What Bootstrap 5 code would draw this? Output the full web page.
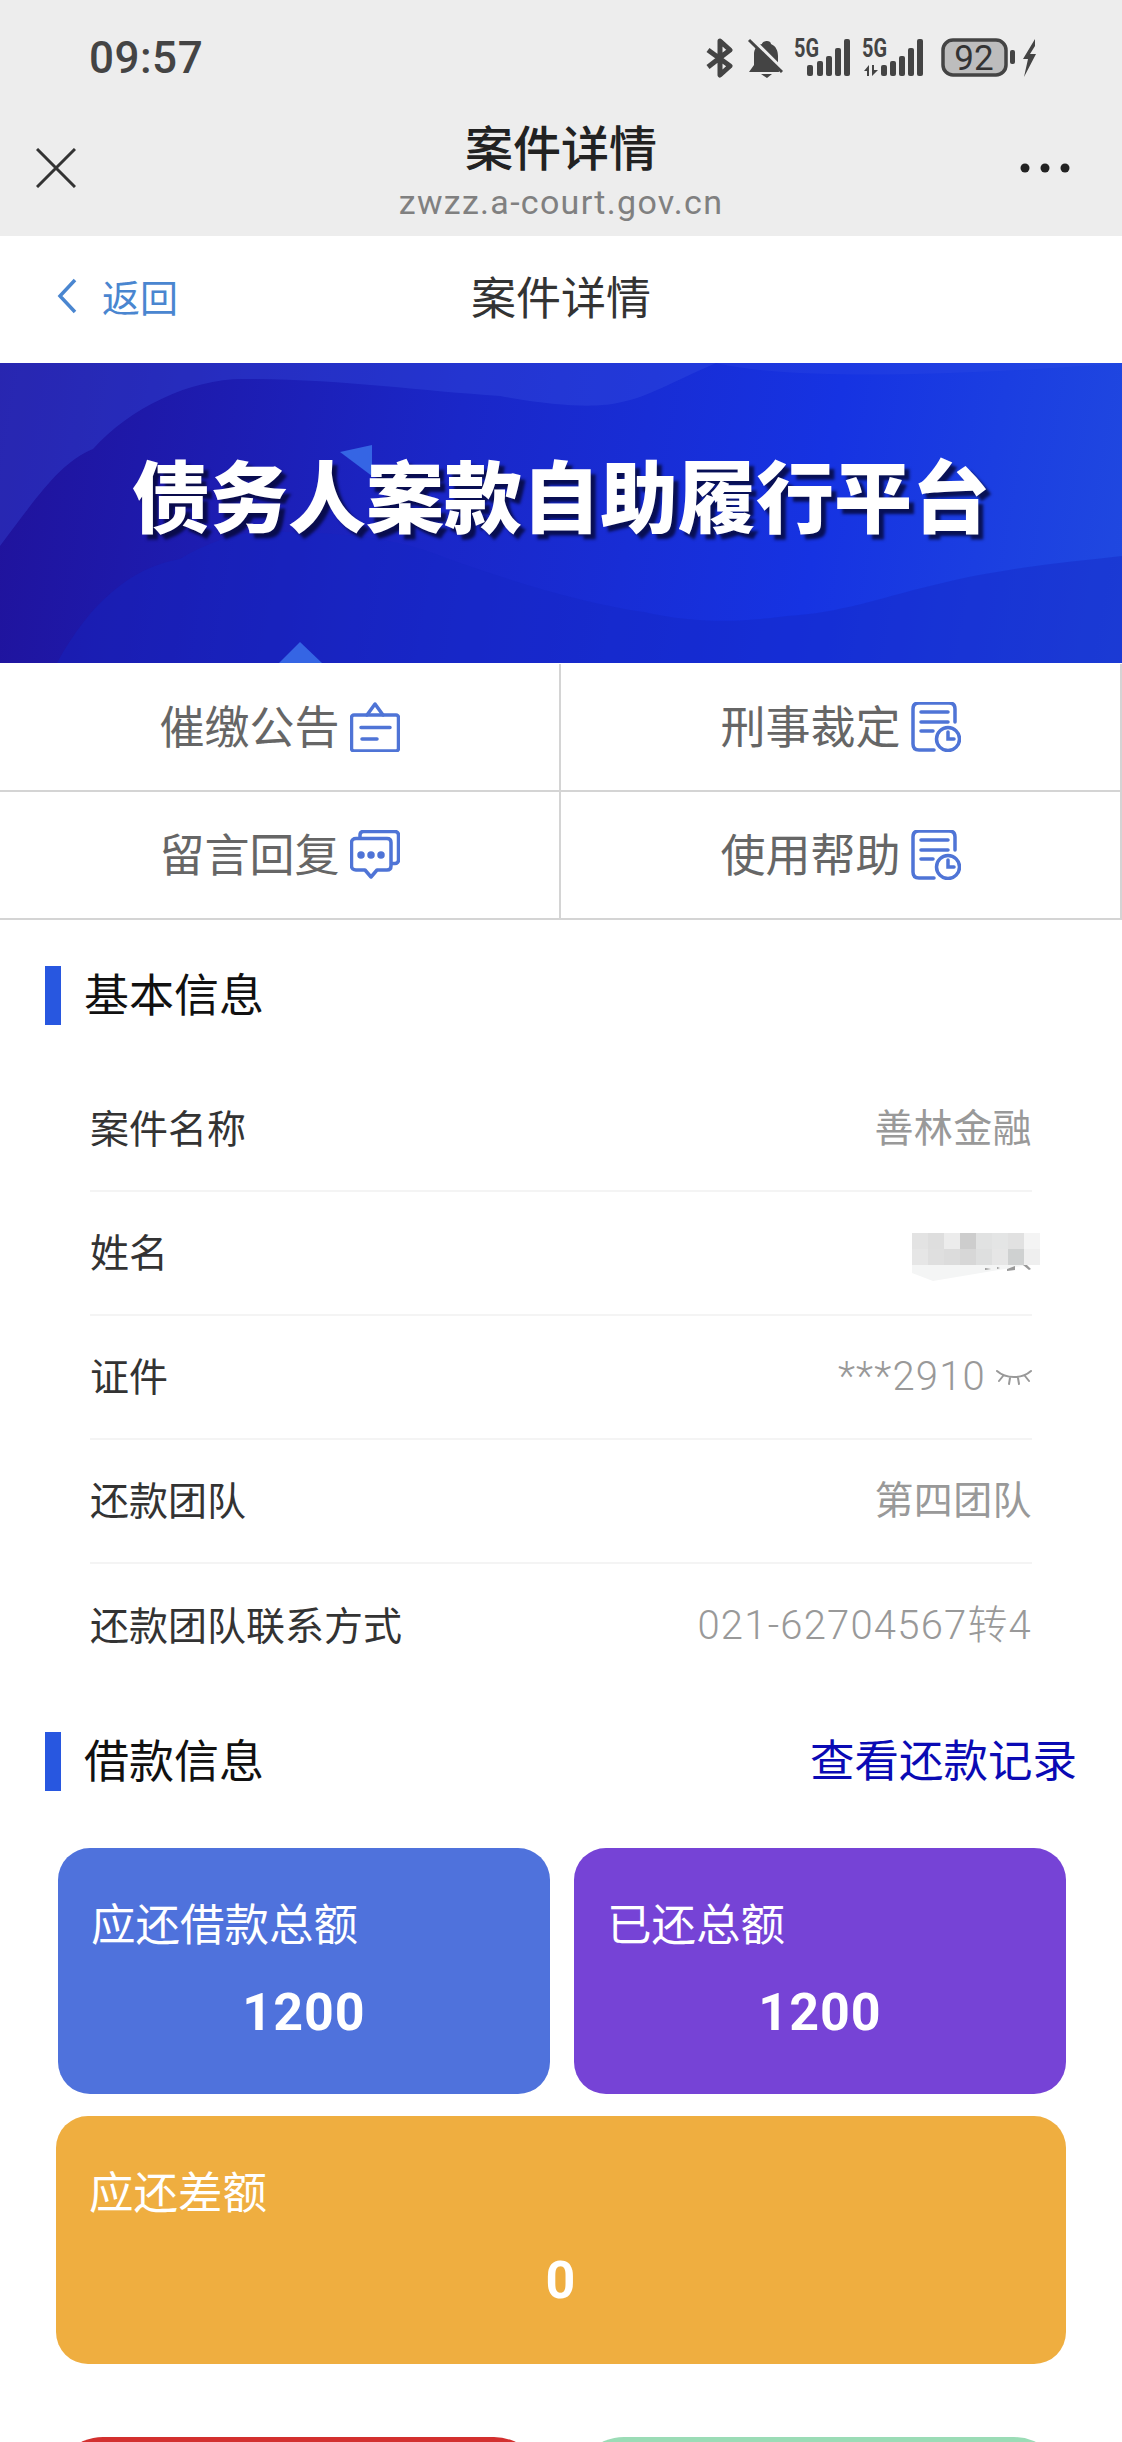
<!DOCTYPE html>
<html lang="zh-CN">
<head>
    <meta charset="UTF-8">
    <meta name="viewport" content="width=device-width, initial-scale=1.0">
    <title>案件详情</title>
    <link href="https://cdn.jsdelivr.net/npm/bootstrap@5.3.0/dist/css/bootstrap.min.css" rel="stylesheet">
    <style>
        html, body { height: 2442px; overflow: hidden; }
        body { font-family: "Noto Sans CJK SC", sans-serif; background: #fff; color: #333; width: 1122px; }

        /* browser chrome */
        .chrome { background: #ededed; height: 236px; }
        .status-row { height: 116px; padding: 0 85px 0 89px; }
        .status-time { font: 500 44px/1 Roboto, sans-serif; color: #444; letter-spacing: .5px; }
        .status-icons svg { display: block; }
        .gap-bell { margin-left: 13px; }
        .gap-sig1 { margin-left: 11px; }
        .gap-sig2 { margin-left: 10px; }
        .gap-batt { margin-left: 17px; }
        .gap-bolt { margin-left: 6px; }
        .title-row { height: 120px; padding: 0 52px 16px 36px; }
        .close-ico { margin-right: 26px; }
        .title-block { padding-top: 5px; }
        .title-main { font-size: 48px; line-height: 1; color: #222; font-weight: 500; }
        .title-url { font: 400 34px/1 Roboto, sans-serif; color: #808080; letter-spacing: 1.3px; margin-top: 16px; }

        /* page nav */
        .page-nav { height: 127px; padding: 0 57px 8px; }
        .back-link { color: #4a86d0; font-size: 38px; line-height: 1; gap: 25px; width: 121px; }
        .page-title { font-size: 45px; color: #333; line-height: 1; }
        .nav-spacer { width: 121px; }

        .banner { height: 300px; margin-bottom: 1px; padding-bottom: 40px; position: relative; overflow: hidden; background: linear-gradient(100deg, #20129a 0%, #1a27c8 40%, #1633e2 72%, #2049e0 100%); }
        .banner svg { position: absolute; inset: 0; }
        .banner-text { position: relative; font-size: 78px; font-weight: 900; color: #fff; line-height: 1; text-shadow: 5px 5px 3px rgba(5, 8, 50, .8); }

        /* 2x2 shortcuts */
        .shortcut { height: 128px; border-right: 2px solid #d4d4d4; border-bottom: 2px solid #d4d4d4; color: #666; font-size: 45px; gap: 10px; line-height: 1; }
        .shortcut span { padding-bottom: 5px; }
        .shortcut svg { flex: none; }

        .section-head { height: 59px; padding-right: 45px; }
        .section-first { margin-top: 46px; }
        .section-second { margin-top: 44px; }
        .section-bar { width: 16px; height: 59px; background: #2857e0; margin-left: 45px; margin-right: 23px; }
        .section-name { font-size: 45px; color: #111; line-height: 1; padding-bottom: 6px; }
        .record-link { font-size: 44.500px; color: #0a0ab4; line-height: 1; text-decoration: none; padding-bottom: 6px; }

        .info-list { margin: 43px 90px 0 90px; }
        .info-row { height: 124px; border-bottom: 2px solid #f4f4f4; font-size: 39px; line-height: 1; color: #333; }
        .info-row:last-child { border-bottom: 0; }
        .info-key { padding-bottom: 6px; }
        .info-val { color: #999; font-family: Roboto, "Noto Sans CJK SC", sans-serif; letter-spacing: .4px; }
        .info-num { font-size: 40px; font-weight: 300; letter-spacing: 1.2px; }
        .eye-gap { gap: 10px; }
        .name-val { position: relative; width: 120px; height: 40px; }
        .name-val svg { position: absolute; right: -8px; top: 0; }

        .tiles { padding: 0 56px; }
        .tiles-top { margin-top: 57px; }
        .tile { border-radius: 32px; color: #fff; height: 246px; padding: 49px 0 0 33px; }
        .tile-half { width: 492px; }
        .tile-blue { background: #4f72dc; margin-left: 2px; }
        .tile-purple { background: #7643d6; }
        .tile-orange { background: #efae40; margin-top: 22px; height: 248px; }
        .tile-label { font-size: 44.500px; line-height: 50px; }
        .tile-num { font: 700 52px/1 Roboto, sans-serif; text-align: center; margin: 40px 33px 0 0; letter-spacing: 1px; }

        .bottom-btns { padding: 73px 58px 0 53px; gap: 30px; }
        .bottom-btn { flex: 1; height: 100px; border-radius: 50px; }
        .btn-red { background: #d3302f; }
        .btn-green { background: #9bdcb6; }
    </style>
</head>
<body>
    <!-- 手机浏览器顶部 -->
    <div class="chrome">
        <div class="status-row d-flex justify-content-between align-items-center">
            <span class="status-time">09:57</span>
            <div class="status-icons d-flex align-items-center">
                <!-- 蓝牙 -->
                <svg width="28" height="40" viewBox="0 0 28 40" fill="none" stroke="#444" stroke-width="5" stroke-linejoin="round"><path d="M2 12l22 16-10 9V3l10 9L2 29"/></svg>
                <!-- 静音铃 -->
                <svg class="gap-bell" width="36" height="40" viewBox="0 0 36 40" fill="#444"><path d="M20 3c2 0 4 1 4 3 5 2 7 7 7 12v8l1 8H2l5-7V16c0-5 3-9 8-10 0-2 3-3 5-3zM14 36h11l-5 4z"/><path d="M5 1l31 31" stroke="#ededed" stroke-width="4"/><path d="M2 2l33 32" stroke="#444" stroke-width="3"/></svg>
                <!-- 信号1 -->
                <svg class="gap-sig1" width="58" height="50" viewBox="0 -5 58 50" fill="#444"><text x="0" y="19" font-family="Roboto, sans-serif" font-weight="700" font-size="25" textLength="25" lengthAdjust="spacingAndGlyphs">5G</text><rect x="13" y="27" width="6" height="11" rx="2"/><rect x="23" y="23" width="6" height="15" rx="2"/><rect x="32" y="18" width="6" height="20" rx="2"/><rect x="41" y="10" width="6" height="28" rx="2"/><rect x="50" y="1" width="6" height="37" rx="2"/></svg>
                <!-- 信号2 -->
                <svg class="gap-sig2" width="62" height="50" viewBox="0 -5 62 50" fill="#444"><text x="0" y="19" font-family="Roboto, sans-serif" font-weight="700" font-size="25" textLength="25" lengthAdjust="spacingAndGlyphs">5G</text><path d="M2 33l5-6v11H5v-5zM10 27h2v5h4l-6 6z"/><rect x="19" y="27" width="6" height="11" rx="2"/><rect x="28" y="23" width="6" height="15" rx="2"/><rect x="37" y="18" width="6" height="20" rx="2"/><rect x="46" y="10" width="6" height="28" rx="2"/><rect x="55" y="1" width="6" height="37" rx="2"/></svg>
                <!-- 电量 -->
                <svg class="gap-batt" width="74" height="40" viewBox="0 0 74 40" fill="none"><rect x="2" y="2" width="63" height="35" rx="10" fill="#bdbdbd" stroke="#444" stroke-width="3.500"/><rect x="69" y="12" width="5" height="14" rx="2" fill="#444"/><text x="33" y="32" text-anchor="middle" font-family="Roboto, sans-serif" font-size="35" fill="#333">92</text></svg>
                <!-- 充电 -->
                <svg class="gap-bolt" width="16" height="38" viewBox="0 0 16 38" fill="#444"><path d="M14 0L2 20h5l-4 18L15 15H9l5-8z"/></svg>
            </div>
        </div>
        <div class="title-row d-flex justify-content-between align-items-center">
            <svg class="close-ico" width="40" height="40" viewBox="0 0 40 40" fill="none" stroke="#333" stroke-width="3"><path d="M1 1l38 38M39 1L1 39"/></svg>
            <div class="title-block text-center align-self-start">
                <div class="title-main">案件详情</div>
                <div class="title-url">zwzz.a-court.gov.cn</div>
            </div>
            <svg width="50" height="10" viewBox="0 0 50 10" fill="#222"><circle cx="5" cy="5" r="4.500"/><circle cx="25" cy="5" r="4.500"/><circle cx="45" cy="5" r="4.500"/></svg>
        </div>
    </div>

    <!-- 页面导航 -->
    <div class="page-nav d-flex align-items-center justify-content-between">
        <div class="back-link d-flex align-items-center">
            <svg width="20" height="36" viewBox="0 0 20 36" fill="none" stroke="#4a86d0" stroke-width="3.500"><path d="M18 2L3 18l15 16"/></svg>
            <span>返回</span>
        </div>
        <div class="page-title">案件详情</div>
        <div class="nav-spacer"></div>
    </div>

    <!-- 横幅 -->
    <div class="banner d-flex justify-content-center align-items-center">
        <svg width="1122" height="300" viewBox="0 0 1122 300">
            <path d="M0 183C40 130 60 100 93 86 130 45 190 16 243 16 340 16 420 28 500 33 560 44 600 45 622 39 650 33 670 20 716 0H0z" fill="#3a56e4" opacity=".3"/>
            <path d="M716 0C800 20 1000 10 1122 0H716z" fill="#3a56e4" opacity=".2"/>
            <path d="M57 300C90 240 130 205 180 196 220 172 260 165 286 169 340 170 390 175 430 189 500 215 580 240 644 249 700 262 750 258 787 253 840 250 880 235 930 223 1000 205 1060 200 1122 193V300z" fill="#1326c4" opacity=".4"/>
            <path d="M340 89l32-7v31z" fill="#3565e4"/>
            <path d="M300 279l-21 21h43z" fill="#3565e4"/>
        </svg>
        <div class="banner-text">债务人案款自助履行平台</div>
    </div>

    <!-- 四个入口 -->
    <div class="row g-0">
        <div class="col-6">
            <div class="shortcut d-flex align-items-center justify-content-center">
                <span>催缴公告</span>
                <svg width="50" height="50" viewBox="0 0 50 50" fill="none" stroke="#4f74d6" stroke-width="3.500" stroke-linejoin="round" stroke-linecap="round"><rect x="1.500" y="13" width="47" height="36" rx="2.500"/><path d="M17 13l8-11 8 11"/><path d="M11 25.500h29M12 37h15"/></svg>
            </div>
        </div>
        <div class="col-6">
            <div class="shortcut d-flex align-items-center justify-content-center">
                <span>刑事裁定</span>
                <svg width="50" height="50" viewBox="0 0 50 50" fill="none" stroke="#4f74d6" stroke-width="3.500" stroke-linecap="round"><path d="M44 20V7c0-4-2-6-6-6H8C4 1 2 3 2 7v35c0 4 2 6 6 6h15"/><path d="M10 10h27M10 20h27M10 29h12"/><circle cx="37" cy="37" r="11.500"/><path d="M37 30v7h6"/></svg>
            </div>
        </div>
        <div class="col-6">
            <div class="shortcut d-flex align-items-center justify-content-center">
                <span>留言回复</span>
                <svg width="50" height="50" viewBox="0 0 50 50" fill="none" stroke="#4f74d6" stroke-width="3.500" stroke-linejoin="round"><path d="M10 8V5c0-2 1-3.500 3.500-3.500H45c2 0 3.500 1.500 3.500 3.500v25c0 2-1.500 3.500-3.500 3.500h-4"/><path d="M6 8.500h31c2.500 0 4 1.500 4 4V36c0 2.500-1.500 4-4 4H27l-6 7-6-7H6c-2.500 0-4.500-1.500-4.500-4V12.500c0-2.500 2-4 4.500-4z"/><circle cx="11" cy="25" r="2" fill="#4f74d6"/><circle cx="21" cy="25" r="2" fill="#4f74d6"/><circle cx="31" cy="25" r="2" fill="#4f74d6"/></svg>
            </div>
        </div>
        <div class="col-6">
            <div class="shortcut d-flex align-items-center justify-content-center">
                <span>使用帮助</span>
                <svg width="50" height="50" viewBox="0 0 50 50" fill="none" stroke="#4f74d6" stroke-width="3.500" stroke-linecap="round"><path d="M44 20V7c0-4-2-6-6-6H8C4 1 2 3 2 7v35c0 4 2 6 6 6h15"/><path d="M10 10h27M10 20h27M10 29h12"/><circle cx="37" cy="37" r="11.500"/><path d="M37 30v7h6"/></svg>
            </div>
        </div>
    </div>

    <!-- 基本信息 -->
    <div class="section-head section-first d-flex align-items-center">
        <div class="section-bar"></div>
        <div class="section-name">基本信息</div>
    </div>
    <div class="info-list">
        <div class="info-row d-flex justify-content-between align-items-center"><span class="info-key">案件名称</span><span class="info-val">善林金融</span></div>
        <div class="info-row d-flex justify-content-between align-items-center">
            <span class="info-key">姓名</span>
            <span class="name-val">
                <svg width="128" height="50" viewBox="0 0 128 50">
                    <path d="M0 32h128v-2L21 48 0 40z" fill="#f4f5f5"/>
                    <path d="M73 35l6 1-6 1zM85 34l3 1-3 1zM95 36l8-3v4l-8 1zM111 32l3-1 5 5-2 1z" fill="#999"/>
                    <g id="mosaic"></g>
                </svg>
            </span>
        </div>
        <div class="info-row d-flex justify-content-between align-items-center">
            <span class="info-key">证件</span>
            <span class="info-val info-num eye-gap d-flex align-items-center">***2910
                <svg width="36" height="18" viewBox="0 0 36 18" fill="none" stroke="#999" stroke-width="2" stroke-linecap="round"><path d="M1 3c9 8 25 8 34 0M7 8L3 13M14 10l-1 6M22 10l1 6M29 8l4 5"/></svg>
            </span>
        </div>
        <div class="info-row d-flex justify-content-between align-items-center"><span class="info-key">还款团队</span><span class="info-val">第四团队</span></div>
        <div class="info-row d-flex justify-content-between align-items-center"><span class="info-key">还款团队联系方式</span><span class="info-val info-num">021-62704567转4</span></div>
    </div>

    <!-- 借款信息 -->
    <div class="section-head section-second d-flex align-items-center justify-content-between">
        <div class="d-flex align-items-center">
            <div class="section-bar"></div>
            <div class="section-name">借款信息</div>
        </div>
        <a class="record-link" href="#">查看还款记录</a>
    </div>
    <div class="tiles">
        <div class="d-flex justify-content-between tiles-top">
            <div class="tile tile-half tile-blue">
                <div class="tile-label">应还借款总额</div>
                <div class="tile-num">1200</div>
            </div>
            <div class="tile tile-half tile-purple">
                <div class="tile-label">已还总额</div>
                <div class="tile-num">1200</div>
            </div>
        </div>
        <div class="tile tile-orange">
            <div class="tile-label">应还差额</div>
            <div class="tile-num">0</div>
        </div>
    </div>
    <div class="bottom-btns d-flex">
        <div class="bottom-btn btn-red"></div>
        <div class="bottom-btn btn-green"></div>
    </div>

    <script src="https://cdn.jsdelivr.net/npm/bootstrap@5.3.0/dist/js/bootstrap.bundle.min.js"></script>
    <script>
        // 姓名打码的马赛克格子
        const cores = [
            ['#e3e3e3', '#dedede', '#ececec', '#cdcdcd', '#e1e2e2', '#e4e5e5', '#e1e1e1', '#f4f4f4'],
            ['#e6e6e6', '#dfdfdf', '#dcdcdc', '#d7d7d7', '#dedfdf', '#e6e6e6', '#cfd1d1', '#efefef']
        ];
        const grupo = document.getElementById('mosaic');
        cores.forEach((linha, y) => linha.forEach((cor, x) => {
            const r = document.createElementNS('http://www.w3.org/2000/svg', 'rect');
            r.setAttribute('x', x * 16);
            r.setAttribute('y', y * 16);
            r.setAttribute('width', 16);
            r.setAttribute('height', 16);
            r.setAttribute('fill', cor);
            grupo.appendChild(r);
        }));
    </script>
</body>
</html>
